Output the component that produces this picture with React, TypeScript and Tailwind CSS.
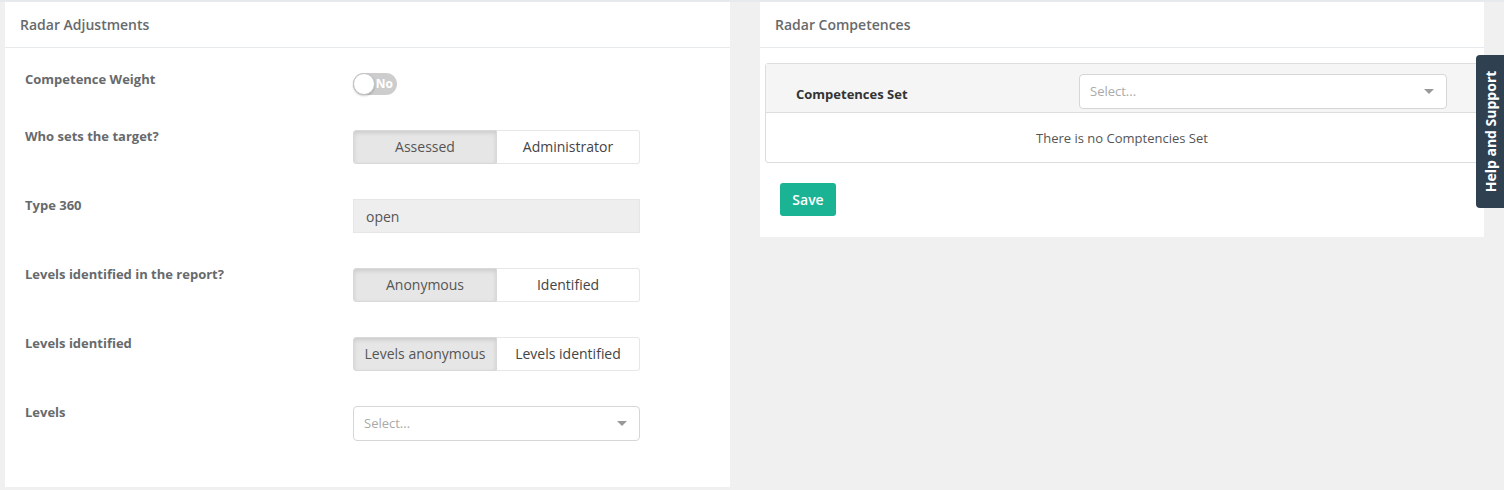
import React from 'react'

const font = { fontFamily: '"Open Sans", "Noto Sans", Arial, sans-serif' }

function Label({ children }: { children: React.ReactNode }) {
  return (
    <div className="w-[328px] -mt-[3px] text-[13px] leading-[18px] font-bold text-[#676a6c]">
      {children}
    </div>
  )
}

function Segmented({ left, right }: { left: string; right: string }) {
  return (
    <div className="flex w-[287px] h-[34px] text-[14px] leading-[30px]">
      <div className="flex-1 flex items-center justify-center bg-[#e6e6e6] border border-[#d9d9d9] rounded-l-[3px] text-[#555] shadow-[inset_0_2px_4px_rgba(0,0,0,0.12)]">
        {left}
      </div>
      <div className="flex-1 flex items-center justify-center bg-white border border-l-0 border-[#e7e7e7] rounded-r-[3px] text-[#444]">
        {right}
      </div>
    </div>
  )
}

function Select({ width }: { width: string }) {
  return (
    <div
      className={`${width} h-[35px] flex items-center justify-between bg-white border border-[#d6d6d6] rounded-[4px] pl-[10px] pr-[12px]`}
    >
      <span className="text-[13px] text-[#aaa]">Select...</span>
      <span className="w-0 h-0 border-l-[5px] border-r-[5px] border-t-[5px] border-l-transparent border-r-transparent border-t-[#999]" />
    </div>
  )
}

function Toggle() {
  return (
    <div className="relative w-[44px] h-[22px] rounded-full bg-[#cdcdcd]">
      <div className="absolute left-0 top-0 w-[22px] h-[22px] rounded-full bg-white border border-[#c4c4c4] shadow-[0_1px_2px_rgba(0,0,0,0.2)]" />
      <span className="absolute right-[4px] top-0 leading-[22px] text-[12px] font-bold text-white">No</span>
    </div>
  )
}

export default function App() {
  return (
    <div style={font} className="relative w-[1504px] h-[490px] bg-[#f0f0f0] overflow-hidden">
      <div className="h-[2px] bg-[#e7eaec]" />
      <div className="flex items-start gap-[30px] pl-[5px]">
        {/* left panel */}
        <div className="w-[725px] h-[485px] bg-white">
          <div className="h-[46px] border-b border-[#e7eaec] pl-[15px] flex items-center text-[14px] font-semibold text-[#676a6c]">
            Radar Adjustments
          </div>
          <div className="pl-[20px] pt-[25px]">
            <div className="flex items-start h-[57px]">
              <Label>Competence Weight</Label>
              <Toggle />
            </div>
            <div className="flex items-start h-[69px]">
              <Label>Who sets the target?</Label>
              <Segmented left="Assessed" right="Administrator" />
            </div>
            <div className="flex items-start h-[69px]">
              <Label>Type 360</Label>
              <div className="w-[287px] h-[34px] flex items-center bg-[#eeeeee] border border-[#e5e6e7] pl-[12px] text-[14px] text-[#555]">
                open
              </div>
            </div>
            <div className="flex items-start h-[69px]">
              <Label>Levels identified in the report?</Label>
              <Segmented left="Anonymous" right="Identified" />
            </div>
            <div className="flex items-start h-[69px]">
              <Label>Levels identified</Label>
              <Segmented left="Levels anonymous" right="Levels identified" />
            </div>
            <div className="flex items-start">
              <Label>Levels</Label>
              <Select width="w-[287px]" />
            </div>
          </div>
        </div>

        {/* right panel */}
        <div className="w-[724px] bg-white pb-[21px]">
          <div className="h-[46px] border-b border-[#e7eaec] pl-[15px] flex items-center text-[14px] font-semibold text-[#676a6c]">
            Radar Competences
          </div>
          <div className="px-[5px] pt-[15px]">
            <div className="border border-[#dddddd] rounded-[3px]">
              <div className="h-[49px] bg-[#f5f5f5] border-b border-[#dddddd] flex items-start pl-[30px] pr-[31px] pt-[10px]">
                <span className="text-[13px] font-bold text-[#333] mt-[11px]">Competences Set</span>
                <div className="ml-auto">
                  <Select width="w-[368px]" />
                </div>
              </div>
              <div className="h-[49px] flex items-center justify-center text-[13px] text-[#555] pt-[2px]">
                There is no Comptencies Set
              </div>
            </div>
            <button className="mt-[20px] ml-[15px] w-[56px] h-[33px] rounded-[3px] bg-[#1ab394] text-white text-[14px] font-semibold">
              Save
            </button>
          </div>
        </div>
      </div>

      {/* help tab */}
      <div className="absolute left-[1476px] top-[55px] w-[30px] h-[153px] bg-[#2f4050] rounded-l-[4px] flex items-center justify-center">
        <span className="-rotate-90 whitespace-nowrap text-[14px] font-bold text-white">Help and Support</span>
      </div>
    </div>
  )
}
